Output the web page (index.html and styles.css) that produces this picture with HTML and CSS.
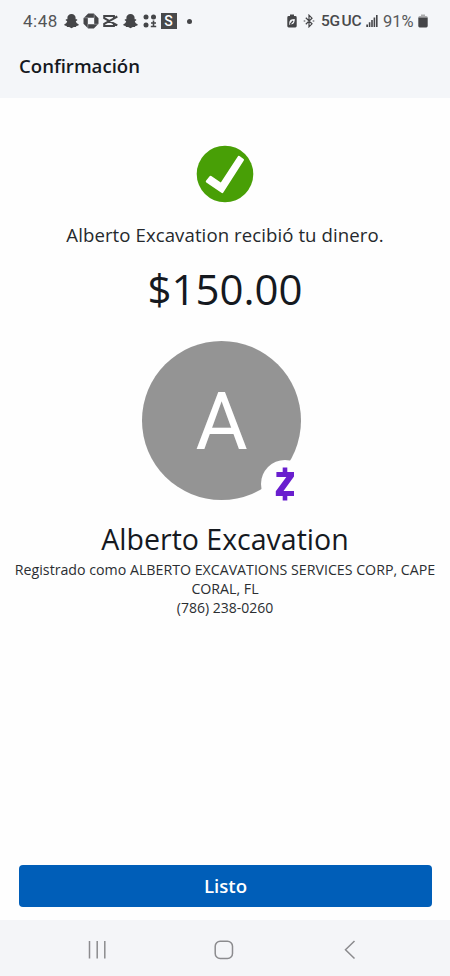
FILE: index.html
```html
<!DOCTYPE html>
<html lang="es">
<head>
<meta charset="utf-8">
<title>Confirmación</title>
<link rel="stylesheet" href="styles.css">
</head>
<body>
<div class="screen">
  <header class="top">
    <div class="status">
      <div class="status-left">
        <span class="clock">4:48</span>
        <svg class="snap" width="15" height="16" viewBox="0 0 15 16"><path d="M7.5 1C5 1 3.4 2.8 3.4 4.8V6.3L1.9 6.2 1.7 7.3 3.2 8.2C2.8 9.7 1.8 10.8.3 11.3L.6 12.5 2.6 12.9 3 14H5.2L7.5 15.2 9.8 14H12L12.4 12.9 14.4 12.5 14.7 11.3C13.2 10.8 12.2 9.7 11.8 8.2L13.3 7.3 13.1 6.2 11.6 6.3V4.8C11.6 2.8 10 1 7.5 1Z"/></svg>
        <svg class="bank" width="16" height="16" viewBox="0 0 16 16"><path fill-rule="evenodd" d="M5.2.5H10.8L15.5 5.2V10.8L10.8 15.5H5.2L.5 10.8V5.2ZM4.8 4.8V11.2H11.2V4.8Z"/><path class="cut" d="M11.2 5V.5M11 11.2H15.5M4.8 11V15.5M5 4.8H.5"/></svg>
        <svg class="clip" width="15" height="14" viewBox="0 0 15 14"><path class="line" d="M14.3 2.5 10.9 4.3V2H1.2V4.1L14.3 11.3M14.3 2.7 1.2 9.9V12H10.9V9.7"/></svg>
        <svg class="snap second" width="15" height="16" viewBox="0 0 15 16"><path d="M7.5 1C5 1 3.4 2.8 3.4 4.8V6.3L1.9 6.2 1.7 7.3 3.2 8.2C2.8 9.7 1.8 10.8.3 11.3L.6 12.5 2.6 12.9 3 14H5.2L7.5 15.2 9.8 14H12L12.4 12.9 14.4 12.5 14.7 11.3C13.2 10.8 12.2 9.7 11.8 8.2L13.3 7.3 13.1 6.2 11.6 6.3V4.8C11.6 2.8 10 1 7.5 1Z"/></svg>
        <svg class="dots" width="14" height="14" viewBox="0 0 14 14"><circle cx="3" cy="3" r="2.5"/><circle cx="10.5" cy="3" r="2.5"/><circle cx="3" cy="11" r="2.5"/><path d="M9.7 6.5H11.3V8.2H13V9.7H11.3V11.8H13.2V13.3H7.8V11.8H9.7V9.7H8V8.2H9.7Z"/></svg>
        <span class="s-app">S</span>
        <span class="more"></span>
      </div>
      <div class="status-right">
        <svg class="saver" width="10" height="14" viewBox="0 0 10 14"><path fill-rule="evenodd" d="M3 .5H7V2H8.3Q9.7 2 9.7 3.4V12Q9.7 13.4 8.3 13.4H1.7Q.3 13.4.3 12V3.4Q.3 2 1.7 2H3ZM7.8 5Q2.3 5 2.3 8.4L2.1 11 3.4 10.2Q7.8 11 7.8 5Z"/><path class="thin" d="M3 10.3 6 7"/></svg>
        <svg class="bt" width="12" height="14" viewBox="0 0 12 14"><path class="thin" d="M2.8 3.8 9 9.8 6 12.8V1.2L9 4.2 2.8 10.2M.7 7H2.3M9.7 7H11.3"/></svg>
        <span class="net">5G UC</span>
        <svg class="signal" width="12" height="12" viewBox="0 0 12 12"><path d="M.3 9.5H2V12H.3ZM2.8 7.3H4.4V12H2.8ZM5.2 5H6.8V12H5.2ZM7.6 2.6H9.2V12H7.6ZM10 0H11.6V12H10Z"/></svg>
        <span class="percent">91%</span>
        <svg class="battery" width="10" height="14" viewBox="0 0 10 14"><path class="soft" d="M3 .5H7V2H8.3Q9.7 2 9.7 3.6H.3Q.3 2 1.7 2H3Z"/><path d="M.3 3.4H9.7V12Q9.7 13.4 8.3 13.4H1.7Q.3 13.4.3 12Z"/></svg>
      </div>
    </div>
    <h1 class="title">Confirmación</h1>
  </header>

  <main class="content">
    <svg class="check" width="58" height="58" viewBox="0 0 58 58"><circle cx="29" cy="29" r="28.3"/><path d="M10 35.8 13.6 31.2Q14.4 30.4 15.3 31.1L24.8 37.4 41.8 11.4Q42.5 10.4 43.5 11.1L47.6 14Q48.4 14.7 47.8 15.6L27.3 47.5Q26.5 48.6 25.4 47.8L10.3 37.5Q9.3 36.7 10 35.8Z"/></svg>
    <p class="message">Alberto Excavation recibió tu dinero.</p>
    <p class="amount">$150.00</p>
    <div class="avatar">
      <span class="initial">A</span>
      <div class="badge">
        <svg width="20" height="34" viewBox="0 0 20 34"><path d="M7.7.5H12.3V5H19V9.6L8.5 24H19V29H12.3V33.5H7.7V29H.8V24.2L11.3 10H1.4V5H7.7Z"/></svg>
      </div>
    </div>
    <h2 class="name">Alberto Excavation</h2>
    <p class="registered">Registrado como ALBERTO EXCAVATIONS SERVICES CORP, CAPE<br>CORAL, FL</p>
    <p class="phone">(786) 238-0260</p>
  </main>

  <footer class="action"><button class="done">Listo</button></footer>
  <nav class="nav">
    <svg width="18" height="20" viewBox="0 0 18 20"><path d="M1.5 1V18.5M9.2 1V18.5M16.8 1V18.5"/></svg>
    <svg width="20" height="20" viewBox="0 0 20 20"><rect x="1.2" y="1.2" width="17.3" height="17.3" rx="5"/></svg>
    <svg width="12" height="20" viewBox="0 0 12 20"><path d="M10.5 1 1.5 9.8 10.5 18.5"/></svg>
  </nav>
</div>
</body>
</html>
```
FILE: styles.css
```css
* { box-sizing: border-box; }
body { margin: 0; background: #fff; }
h1, h2, p { margin: 0; font-weight: 400; }
.screen {
  width: 450px;
  height: 976px;
  display: flex;
  flex-direction: column;
  background: #fefefe;
  color: #15191f;
  font-family: "Open Sans", "Noto Sans", sans-serif;
}
.top { height: 98px; background: #f4f6f9; flex: none; }
.status {
  height: 42px;
  padding: 0 22px 0 23px;
  display: flex;
  justify-content: space-between;
  color: #48494b;
  font-family: Roboto, "Liberation Sans", sans-serif;
}
.status-left, .status-right { display: flex; align-items: center; }
.status svg { fill: #444548; flex: none; display: block; }
.clock { width: 41px; font-size: 17px; letter-spacing: .5px; color: #535456; }
.bank { margin-left: 3.5px; }
.status .cut { fill: none; stroke: #c5c7ca; stroke-width: .5; }
.clip { margin-left: 4px; }
.status .line { fill: none; stroke: #444548; stroke-width: 2; }
.second { margin-left: 5px; }
.dots { margin-left: 5px; }
.s-app {
  width: 16px;
  height: 16px;
  margin-left: 4px;
  background: #48494b;
  color: #fff;
  font-size: 14px;
  font-weight: 500;
  line-height: 16px;
  text-align: center;
}
.more { width: 5px; height: 5px; margin-left: 10px; border-radius: 50%; background: #444548; }
.status .thin { fill: none; stroke: #444548; stroke-width: 1.2; }
.bt { margin-left: 6px; }
.net { width: 41px; margin-left: 6px; font-size: 15.5px; font-weight: 500; letter-spacing: -.2px; word-spacing: -2px; white-space: nowrap; }
.signal { margin-left: 4px; }
.percent { width: 34px; margin-left: 5px; margin-right: 1px; font-size: 16.5px; letter-spacing: 0; color: #58595b; }
.status .soft { fill: #aaabad; }
.title { padding-left: 19px; font-size: 18.6px; font-weight: 600; line-height: 26px; margin-top: 11px; letter-spacing: 0; }
.content { flex: 1; display: flex; flex-direction: column; align-items: center; padding-top: 47px; text-align: center; }
.check { fill: #fff; flex: none; }
.check circle { fill: #489f06; }
.message { margin-top: 19px; font-size: 18.6px; line-height: 26px; letter-spacing: .08px; color: #25292d; white-space: nowrap; }
.amount { margin-top: 12px; font-size: 42px; line-height: 58px; }
.avatar {
  position: relative;
  width: 159px;
  height: 159px;
  margin: 23px 8px 0 0;
  border-radius: 50%;
  background: #949494;
  display: flex;
  align-items: center;
  justify-content: center;
  flex: none;
}
.initial { padding: 2px 0 0 1px; color: #fff; font: 80px/80px Roboto, sans-serif; }
.badge {
  position: absolute;
  left: 119px;
  top: 119px;
  width: 48px;
  height: 48px;
  border-radius: 50%;
  background: #fefefe;
  display: flex;
  align-items: center;
  justify-content: center;
}
.badge svg { fill: #691ece; }
.name { margin-top: 19px; font-size: 28.5px; line-height: 40px; }
.registered { font-size: 14.2px; line-height: 19px; padding-top: 1px; color: #2b2e32; white-space: nowrap; }
.phone { font-size: 14px; line-height: 20px; color: #2b2e32; }
.action { padding: 0 19px 13px; flex: none; }
.done {
  display: block;
  width: 413px;
  height: 42px;
  padding: 0;
  border: 0;
  border-radius: 4px;
  background: #005eb8;
  color: #fff;
  font: 600 18.6px/42px "Open Sans", sans-serif;
}
.nav { height: 56px; flex: none; background: #f4f5f8; display: flex; justify-content: space-between; align-items: center; padding: 3px 94px 0 88px; }
.nav svg { fill: none; stroke: #8b8b8e; stroke-width: 1.5; }
.nav svg:nth-child(2) { margin-right: 2.5px; }
```
